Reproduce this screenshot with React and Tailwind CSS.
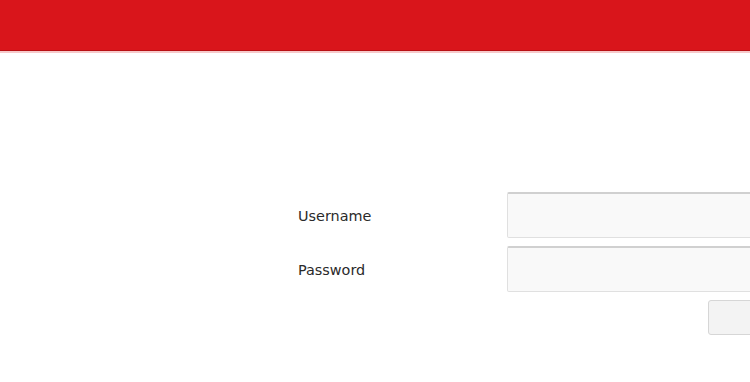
export default function App() {
  return (
    <div className="w-[750px] h-[382px] overflow-hidden bg-white" style={{ fontFamily: '"DejaVu Sans", Verdana, sans-serif' }}>
      <div className="h-[51px] bg-[#d9151b] border-b border-[#b80f14]"></div>
      <div className="h-[2px] bg-[#f6c9ca]"></div>
      <div className="pt-[139px] pl-[298px] flex flex-col gap-2">
        <div className="flex items-center">
          <label className="w-[209px] shrink-0 text-[14.4px] text-[#2a2a2a] pt-[3px]">Username</label>
          <input className="w-[260px] h-[46px] shrink-0 bg-[#f9f9f9] border border-[#e0e0e0] border-t-[#d0d0d0] border-t-2 rounded-[2px] outline-none" />
        </div>
        <div className="flex items-center">
          <label className="w-[209px] shrink-0 text-[14.4px] text-[#2a2a2a] pt-[3px]">Password</label>
          <input type="password" className="w-[260px] h-[46px] shrink-0 bg-[#f9f9f9] border border-[#e0e0e0] border-t-[#d0d0d0] border-t-2 rounded-[2px] outline-none" />
        </div>
        <div className="flex">
          <button className="ml-[410px] w-[80px] h-[35px] shrink-0 bg-[#f3f3f3] border border-[#d6d6d6] rounded-[3px]"></button>
        </div>
      </div>
    </div>
  );
}
